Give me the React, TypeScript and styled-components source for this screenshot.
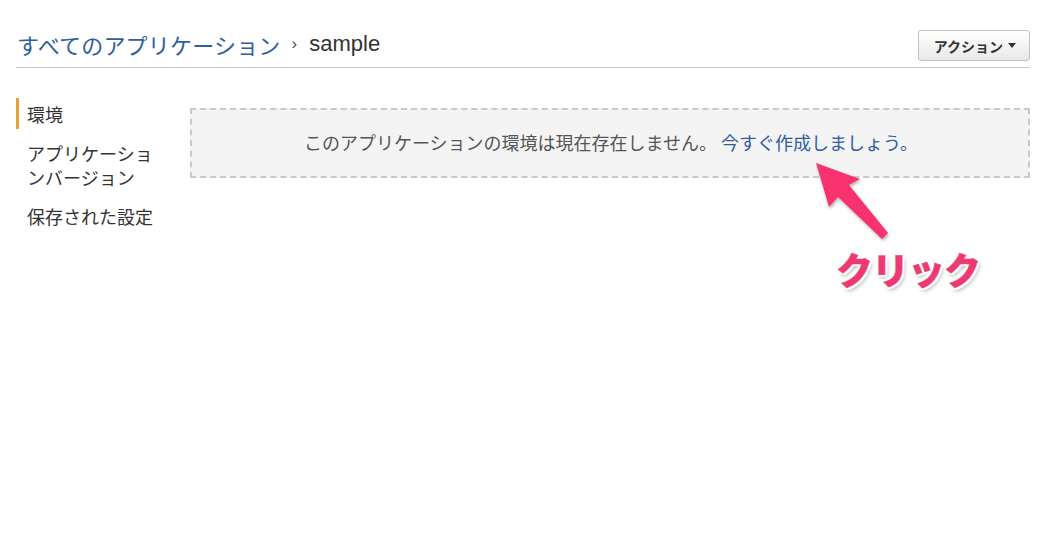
import React from "react";
import styled, { createGlobalStyle } from "styled-components";

const GlobalStyle = createGlobalStyle`
  html, body {
    margin: 0;
    padding: 0;
    background: #ffffff;
  }
  body {
    font-family: "Liberation Sans", "Noto Sans CJK JP", sans-serif;
    color: #333;
  }
`;

const Page = styled.div`
  position: relative;
  width: 1047px;
  height: 551px;
  padding: 30px 17px 0 16px;
  box-sizing: border-box;
  overflow: hidden;
`;

const Header = styled.header`
  display: flex;
  align-items: center;
  justify-content: space-between;
  padding-bottom: 6px;
  border-bottom: 1px solid #c8c8c8;
`;

const Crumbs = styled.div`
  display: flex;
  align-items: center;
  font-size: 22px;
  line-height: 30px;
  padding-left: 1px;
  margin-top: -3px;
`;

const CrumbLink = styled.a`
  color: #2f5d9e;
  text-decoration: none;
  font-family: "Noto Sans CJK JP", sans-serif;
  letter-spacing: 0.2px;
`;

const Sep = styled.span`
  color: #555;
  font-size: 17px;
  margin: 0 12px 0 11px;
`;

const Current = styled.span`
  color: #333;
  font-family: "Liberation Sans", Arial, sans-serif;
`;

const ActionButton = styled.button`
  display: flex;
  align-items: center;
  gap: 5px;
  height: 31px;
  padding: 0 13px 0 15px;
  border: 1px solid #c4c4c4;
  border-radius: 3px;
  background: linear-gradient(#ffffff, #e8e8e8);
  box-shadow: inset 0 1px 0 #fff;
  font-family: "Noto Sans CJK JP", sans-serif;
  font-weight: 700;
  font-size: 14px;
  color: #333;
`;

const Caret = styled.span`
  width: 0;
  height: 0;
  border-left: 4px solid transparent;
  border-right: 4px solid transparent;
  border-top: 5px solid #333;
`;

const Body = styled.div`
  display: flex;
  align-items: flex-start;
  padding-top: 30px;
`;

const Sidebar = styled.nav`
  display: flex;
  flex-direction: column;
  gap: 8px;
  width: 174px;
  flex-shrink: 0;
`;

const NavItem = styled.a<{ $active?: boolean }>`
  display: block;
  width: 134px;
  padding: 3.5px 0 3.5px 8px;
  border-left: 3px solid ${(p) => (p.$active ? "#e8a13a" : "transparent")};
  font-family: "Noto Sans CJK JP", sans-serif;
  font-size: 18px;
  line-height: 24px;
  color: #333;
  text-decoration: none;
`;

const EmptyBox = styled.div`
  flex: 1;
  margin-top: 10px;
  height: 70px;
  box-sizing: border-box;
  display: flex;
  align-items: center;
  justify-content: center;
  background: #f4f4f4;
  border: 2px dashed #c9c9c9;
  font-family: "Noto Sans CJK JP", sans-serif;
  font-size: 18px;
  color: #555;
  padding: 0 0 2px 2px;
`;

const CreateLink = styled.a`
  color: #2f5d9e;
  text-decoration: none;
  margin-left: 4px;
`;

const Annotation = styled.svg`
  position: absolute;
  left: 0;
  top: 0;
  pointer-events: none;
`;

const ClickLabel = styled.span`
  position: absolute;
  left: 836px;
  top: 244px;
  font-family: "Noto Sans CJK JP", sans-serif;
  font-weight: 900;
  font-size: 37px;
  line-height: 50px;
  color: #ee3a72;
  letter-spacing: -1px;
  -webkit-text-stroke: 0.5px #ee3a72;
  text-shadow: 2px 0 0 #fff, -2px 0 0 #fff, 0 2px 0 #fff, 0 -2px 0 #fff,
    2px 2px 0 #fff, -2px 2px 0 #fff, 2px -2px 0 #fff, -2px -2px 0 #fff,
    2px 3px 4px rgba(0, 0, 0, 0.35);
`;

const App: React.FC = () => {
  return (
    <Page>
      <GlobalStyle />
      <Header>
        <Crumbs>
          <CrumbLink href="#">すべてのアプリケーション</CrumbLink>
          <Sep>›</Sep>
          <Current>sample</Current>
        </Crumbs>
        <ActionButton>
          アクション
          <Caret />
        </ActionButton>
      </Header>
      <Body>
        <Sidebar>
          <NavItem href="#" $active>
            環境
          </NavItem>
          <NavItem href="#">アプリケーションバージョン</NavItem>
          <NavItem href="#">保存された設定</NavItem>
        </Sidebar>
        <EmptyBox>
          このアプリケーションの環境は現在存在しません。
          <CreateLink href="#">今すぐ作成しましょう。</CreateLink>
        </EmptyBox>
      </Body>
      <Annotation width="1047" height="551" viewBox="0 0 1047 551">
        <defs>
          <filter id="arrowShadow" x="-20%" y="-20%" width="140%" height="140%">
            <feDropShadow dx="1" dy="2" stdDeviation="1.5" floodColor="#000" floodOpacity="0.3" />
          </filter>
        </defs>
        <polygon
          points="816,163 860,179 849,185 888,233 882,239 838,197 829,207"
          fill="#f7336e"
          filter="url(#arrowShadow)"
        />
      </Annotation>
      <ClickLabel>クリック</ClickLabel>
    </Page>
  );
};

export default App;
